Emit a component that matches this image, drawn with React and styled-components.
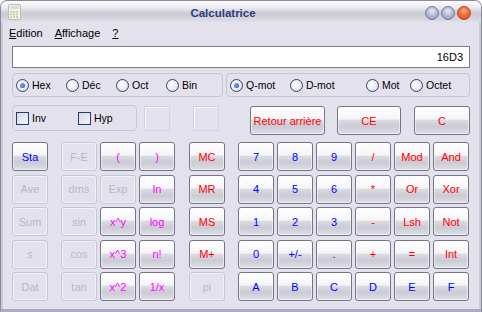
import React from "react";
import styled, { createGlobalStyle, css } from "styled-components";

const GlobalStyle = createGlobalStyle`
  html, body {
    margin: 0;
    padding: 0;
    background: #ffffff;
  }
  body {
    font-family: "Liberation Sans", Arial, sans-serif;
  }
`;

const Window = styled.div`
  box-sizing: border-box;
  width: 482px;
  height: 312px;
  display: flex;
  flex-direction: column;
  background: #e3e2ec;
  border: 1px solid #8a8a9a;
  border-bottom: 3px solid #a9abc2;
  border-radius: 7px 7px 0 0;
  box-shadow: inset 2px 0 0 #cbcbd6, inset -2px 0 0 #cbcbd6;
  overflow: hidden;
`;

const TitleBar = styled.div`
  height: 21px;
  flex: none;
  display: flex;
  align-items: center;
  padding: 0 10px 0 7px;
  background: linear-gradient(#fcfcfd 0%, #ececf1 30%, #c9c9d3 60%, #d6d6de 85%, #e0dfe8 100%);
`;

const Title = styled.div`
  flex: 1;
  text-align: center;
  font-size: 11.5px;
  font-weight: bold;
  color: #2f3d7e;
  padding-top: 2px;
`;

const WinButtons = styled.div`
  display: flex;
  gap: 2px;
  padding-top: 2px;
`;

const WinButton = styled.span`
  width: 14px;
  height: 14px;
  box-sizing: border-box;
  border-radius: 50%;
  border: 1px solid ${(p) => (p.$close ? "#b8461e" : "#7178a0")};
  background: ${(p) =>
    p.$close
      ? "radial-gradient(circle at 50% 35%, #ffb08a 0%, #f26a3a 45%, #d9421a 100%)"
      : "radial-gradient(circle at 50% 35%, #e8eaf6 0%, #b2b7d6 50%, #8d93bb 100%)"};
`;

const MenuBar = styled.div`
  height: 21px;
  flex: none;
  display: flex;
  align-items: center;
  gap: 12px;
  padding-left: 8px;
  font-size: 11px;
  color: #000;
`;

const MenuItem = styled.span`
  & u {
    text-decoration: underline;
  }
`;

const Body = styled.div`
  padding: 0 11px;
  display: flex;
  flex-direction: column;
`;

const Display = styled.div`
  box-sizing: border-box;
  margin-top: 3px;
  height: 22px;
  background: #ffffff;
  border: 1px solid #7c7c88;
  display: flex;
  align-items: center;
  justify-content: flex-end;
  padding-right: 6px;
  font-size: 11px;
  color: #000;
`;

const OptionRow = styled.div`
  margin-top: 5px;
  display: flex;
  gap: 3px;
`;

const GroupBox = styled.div`
  box-sizing: border-box;
  height: ${(p) => p.$h || 24}px;
  width: ${(p) => (p.$w ? `${p.$w}px` : "auto")};
  flex: ${(p) => (p.$w ? "none" : 1)};
  border: 1px solid #c6c6d2;
  border-radius: 4px;
  display: flex;
  align-items: center;
  padding-left: 3px;
`;

const Option = styled.label`
  width: ${(p) => (p.$w ? `${p.$w}px` : "auto")};
  display: flex;
  align-items: center;
  gap: 3px;
  font-size: 10.5px;
  color: #000;
`;

const Radio = styled.span`
  box-sizing: border-box;
  width: 13px;
  height: 13px;
  border-radius: 50%;
  border: 1px solid #2e4170;
  background: radial-gradient(circle at 40% 40%, #ffffff 0%, #e8e8ee 60%, #cfd0da 100%);
  display: flex;
  align-items: center;
  justify-content: center;

  &::after {
    content: "";
    width: 5px;
    height: 5px;
    border-radius: 50%;
    background: radial-gradient(circle at 40% 40%, #7fa0f0 0%, #2553c6 100%);
    display: ${(p) => (p.$on ? "block" : "none")};
  }
`;

const Check = styled.span`
  box-sizing: border-box;
  width: 13px;
  height: 13px;
  border: 1px solid #1f3b78;
  background: linear-gradient(135deg, #d8d8e0 0%, #f4f4f7 100%);
`;

const ControlRow = styled.div`
  margin-top: 8px;
  height: 30px;
  display: flex;
  align-items: flex-start;
`;

const EmptyBox = styled.div`
  box-sizing: border-box;
  margin-top: 1px;
  margin-left: ${(p) => p.$ml}px;
  width: 26px;
  height: 25px;
  border: 1px solid #d2d2dc;
  box-shadow: inset 1px 1px 0 #f6f6f9;
`;

const keyBase = css`
  box-sizing: border-box;
  height: 29px;
  padding: 0;
  border-radius: 3px;
  font-family: "Liberation Sans", Arial, sans-serif;
  font-size: 11px;
  border: 1px solid #75758a;
  background: linear-gradient(#ffffff 0%, #f5f5f8 44%, #dadae2 50%, #cbcbd5 72%, #dedee6 100%);
  box-shadow: inset 0 0 0 1px rgba(255, 255, 255, 0.55);
  cursor: default;
`;

const Key = styled.button`
  ${keyBase};
  width: ${(p) => p.$w || 36}px;
  margin-left: ${(p) => p.$ml || 0}px;
  color: ${(p) => p.$c};

  &:disabled {
    color: #b7b7c4;
    border-color: #c7c7d1;
    background: #e3e2ec;
    box-shadow: inset 0 0 0 1px #f1f1f5;
  }
`;

const Keypad = styled.div`
  margin-top: 7px;
  display: flex;
  gap: 13px;
`;

const KeyGroup = styled.div`
  display: grid;
  grid-template-columns: repeat(${(p) => p.$cols}, 36px);
  grid-auto-rows: 29px;
  column-gap: 3px;
  row-gap: 3.5px;
  margin-left: ${(p) => p.$ml || 0}px;
`;

const COLORS = { b: "#0000ff", m: "#ff00ff", r: "#ff0000", d: "#b7b7c4" };

const groups = [
  { cols: 1, keys: ["Sta:b", "Ave:d", "Sum:d", "s:d", "Dat:d"] },
  {
    cols: 3,
    keys: [
      "F-E:d", "(:m", "):m",
      "dms:d", "Exp:d", "ln:m",
      "sin:d", "x^y:m", "log:m",
      "cos:d", "x^3:m", "n!:m",
      "tan:d", "x^2:m", "1/x:m",
    ],
  },
  { cols: 1, ml: 1, keys: ["MC:r", "MR:r", "MS:r", "M+:r", "pi:d"] },
  {
    cols: 6,
    keys: [
      "7:b", "8:b", "9:b", "/:r", "Mod:r", "And:r",
      "4:b", "5:b", "6:b", "*:r", "Or:r", "Xor:r",
      "1:b", "2:b", "3:b", "-:r", "Lsh:r", "Not:r",
      "0:b", "+/-:b", ".:b", "+:r", "=:r", "Int:r",
      "A:b", "B:b", "C:b", "D:b", "E:b", "F:b",
    ],
  },
];

function parseKey(k) {
  const i = k.lastIndexOf(":");
  return { label: k.slice(0, i), kind: k.slice(i + 1) };
}

const CalcIcon = () => (
  <svg width="13" height="16" viewBox="0 0 13 16">
    <rect x="0.5" y="0.5" width="12" height="15" rx="1.5" fill="#f2f4ee" stroke="#b9bdb4" />
    <rect x="2" y="2" width="9" height="3" fill="#d6dcd0" />
    {[0, 1, 2].map((r) =>
      [0, 1, 2].map((c) => (
        <rect key={`${r}-${c}`} x={2 + c * 3} y={7 + r * 2.6} width="2.2" height="1.8" fill="#b6d6a8" />
      ))
    )}
  </svg>
);

export default function App() {
  return (
    <>
      <GlobalStyle />
      <Window>
        <TitleBar>
          <CalcIcon />
          <Title>Calculatrice</Title>
          <WinButtons>
            <WinButton />
            <WinButton />
            <WinButton $close />
          </WinButtons>
        </TitleBar>
        <MenuBar>
          <MenuItem>
            <u>E</u>dition
          </MenuItem>
          <MenuItem>
            <u>A</u>ffichage
          </MenuItem>
          <MenuItem>
            <u>?</u>
          </MenuItem>
        </MenuBar>
        <Body>
          <Display>16D3</Display>
          <OptionRow>
            <GroupBox $w={211}>
              <Option $w={50}><Radio $on />Hex</Option>
              <Option $w={50}><Radio />Déc</Option>
              <Option $w={50}><Radio />Oct</Option>
              <Option><Radio />Bin</Option>
            </GroupBox>
            <GroupBox>
              <Option $w={60}><Radio $on />Q-mot</Option>
              <Option $w={76}><Radio />D-mot</Option>
              <Option $w={44}><Radio />Mot</Option>
              <Option><Radio />Octet</Option>
            </GroupBox>
          </OptionRow>
          <ControlRow>
            <GroupBox $w={125} $h={26}>
              <Option $w={62}><Check />Inv</Option>
              <Option><Check />Hyp</Option>
            </GroupBox>
            <EmptyBox $ml={7} />
            <EmptyBox $ml={23} />
            <Key $w={75} $ml={31} $c={COLORS.r} style={{ marginTop: 1 }}>
              Retour arrière
            </Key>
            <Key $w={64} $ml={12} $c={COLORS.r} style={{ marginTop: 1 }}>
              CE
            </Key>
            <Key $w={56} $ml={13} $c={COLORS.r} style={{ marginTop: 1 }}>
              C
            </Key>
          </ControlRow>
          <Keypad>
            {groups.map((g, gi) => (
              <KeyGroup key={gi} $cols={g.cols} $ml={g.ml}>
                {g.keys.map((k, ki) => {
                  const { label, kind } = parseKey(k);
                  return (
                    <Key key={ki} $c={COLORS[kind]} disabled={kind === "d"}>
                      {label}
                    </Key>
                  );
                })}
              </KeyGroup>
            ))}
          </Keypad>
        </Body>
      </Window>
    </>
  );
}
